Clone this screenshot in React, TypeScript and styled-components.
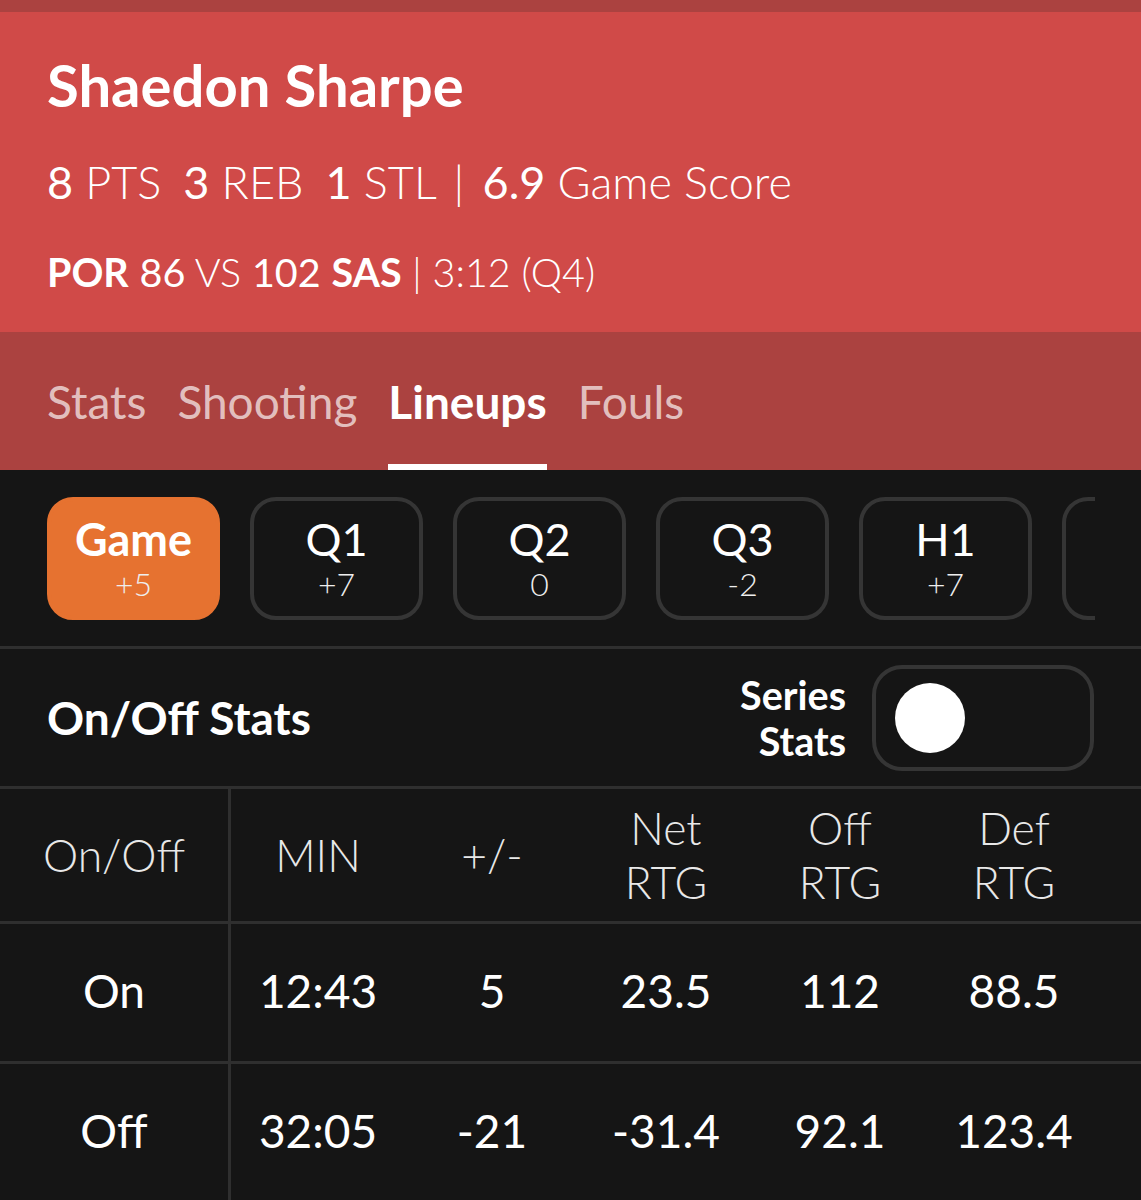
import React from 'react';
import styled, { createGlobalStyle } from 'styled-components';

const GlobalStyle = createGlobalStyle`
  html, body {
    margin: 0;
    padding: 0;
    background: #151515;
  }
  body {
    font-family: Lato, "Open Sans", sans-serif;
    color: #fff;
  }
`;

const periods = [
  { label: 'Game', diff: '+5', active: true },
  { label: 'Q1', diff: '+7' },
  { label: 'Q2', diff: '0' },
  { label: 'Q3', diff: '-2' },
  { label: 'H1', diff: '+7' },
  { label: '', diff: '' },
];

const headers = ['On/Off', 'MIN', '+/-', 'Net RTG', 'Off RTG', 'Def RTG'];

const rows = [
  ['On', '12:43', '5', '23.5', '112', '88.5'],
  ['Off', '32:05', '-21', '-31.4', '92.1', '123.4'],
];

export default function App() {
  return (
    <Page>
      <GlobalStyle />
      <TopStrip />
      <Header>
        <PlayerName>Shaedon Sharpe</PlayerName>
        <StatLine>
          <Stat>
            <b>8</b> PTS
          </Stat>
          <Stat>
            <b>3</b> REB
          </Stat>
          <b>1</b> STL <Sep>|</Sep> <b>6.9</b> Game Score
        </StatLine>
        <ScoreLine>
          <strong>POR</strong> <b>86</b> VS <b>102</b> <strong>SAS</strong> <Sep>|</Sep> 3:12 (Q4)
        </ScoreLine>
      </Header>

      <Tabs>
        {['Stats', 'Shooting', 'Lineups', 'Fouls'].map(t => (
          <Tab key={t} $active={t === 'Lineups'}>
            {t}
          </Tab>
        ))}
      </Tabs>

      <PeriodStrip>
        <PeriodScroller>
          {periods.map((p, i) => (
            <PeriodButton key={i} $active={p.active}>
              {p.label && <PeriodLabel $active={p.active}>{p.label}</PeriodLabel>}
              {p.diff && <PeriodDiff>{p.diff}</PeriodDiff>}
            </PeriodButton>
          ))}
        </PeriodScroller>
      </PeriodStrip>

      <SectionRow>
        <SectionTitle>On/Off Stats</SectionTitle>
        <ToggleGroup>
          <ToggleLabel>
            Series
            <br />
            Stats
          </ToggleLabel>
          <Toggle>
            <Knob />
          </Toggle>
        </ToggleGroup>
      </SectionRow>

      <Table>
        <TableRow $head>
          {headers.map((h, i) => (
            <HeadCell key={h} $first={i === 0}>
              {h.includes(' ') ? (
                <>
                  {h.split(' ')[0]}
                  <br />
                  {h.split(' ')[1]}
                </>
              ) : (
                h
              )}
            </HeadCell>
          ))}
        </TableRow>
        {rows.map(r => (
          <TableRow key={r[0]}>
            {r.map((v, i) => (
              <Cell key={i} $first={i === 0}>
                {v}
              </Cell>
            ))}
          </TableRow>
        ))}
      </Table>
    </Page>
  );
}

const Page = styled.div`
  width: 1141px;
  min-height: 1200px;
  background: #151515;
  overflow: hidden;
`;

const TopStrip = styled.div`
  height: 12px;
  background: #ab4240;
`;

const Header = styled.div`
  height: 320px;
  box-sizing: border-box;
  padding: 42px 47px 0;
  background: #d04a48;
  display: flex;
  flex-direction: column;
`;

const PlayerName = styled.div`
  font-size: 58px;
  font-weight: 700;
  line-height: 62px;
`;

const StatLine = styled.div`
  margin-top: 40px;
  font-size: 45px;
  font-weight: 300;
  line-height: 52px;
  white-space: nowrap;

  b {
    font-weight: 400;
  }
`;

const Stat = styled.span`
  margin-right: 22px;
`;

const Sep = styled.span`
  font-weight: 300;
  padding: 0 6px;
`;

const ScoreLine = styled.div`
  margin-top: 42px;
  font-size: 39.5px;
  font-weight: 300;
  line-height: 44px;

  b {
    font-weight: 400;
  }
  strong {
    font-weight: 700;
  }
  ${Sep} {
    padding: 0;
  }
`;

const Tabs = styled.div`
  height: 138px;
  box-sizing: border-box;
  padding: 0 47px;
  background: #ab4240;
  display: flex;
  gap: 31px;
`;

const Tab = styled.div<{ $active?: boolean }>`
  display: flex;
  align-items: center;
  padding-top: 6px;
  font-size: 46px;
  font-weight: ${p => (p.$active ? 700 : 400)};
  color: ${p => (p.$active ? '#fff' : 'rgba(255, 255, 255, 0.68)')};
  border-bottom: 6px solid ${p => (p.$active ? '#fff' : 'transparent')};
`;

const PeriodStrip = styled.div`
  padding: 27px 46px 26px 47px;
  border-bottom: 3px solid #2f2f2f;
`;

const PeriodScroller = styled.div`
  display: flex;
  gap: 30px;
  overflow: hidden;
`;

const PeriodButton = styled.div<{ $active?: boolean }>`
  flex: 0 0 auto;
  width: 173px;
  height: 123px;
  box-sizing: border-box;
  border-radius: 26px;
  border: 4px solid ${p => (p.$active ? '#e67230' : '#353535')};
  background: ${p => (p.$active ? '#e67230' : 'transparent')};
  display: flex;
  flex-direction: column;
  align-items: center;
  justify-content: center;
`;

const PeriodLabel = styled.div<{ $active?: boolean }>`
  font-size: 45px;
  font-weight: ${p => (p.$active ? 700 : 400)};
  line-height: 50px;
`;

const PeriodDiff = styled.div`
  font-size: 32px;
  font-weight: 300;
  line-height: 40px;
  color: #eee;
`;

const SectionRow = styled.div`
  height: 140px;
  box-sizing: border-box;
  padding: 0 47px;
  display: flex;
  align-items: center;
  justify-content: space-between;
  border-bottom: 3px solid #2f2f2f;
`;

const SectionTitle = styled.div`
  font-size: 46px;
  font-weight: 700;
`;

const ToggleGroup = styled.div`
  display: flex;
  align-items: center;
  gap: 26px;
`;

const ToggleLabel = styled.div`
  text-align: right;
  font-size: 39.5px;
  font-weight: 700;
  line-height: 46px;
`;

const Toggle = styled.div`
  width: 222px;
  height: 106px;
  box-sizing: border-box;
  border: 4px solid #353535;
  border-radius: 30px;
  display: flex;
  align-items: center;
  padding-left: 19px;
`;

const Knob = styled.div`
  width: 70px;
  height: 70px;
  border-radius: 50%;
  background: #fff;
`;

const Table = styled.div`
  display: flex;
  flex-direction: column;
`;

const HeadCell = styled.div<{ $first?: boolean }>`
  display: flex;
  align-items: center;
  justify-content: center;
  text-align: center;
  font-size: 44.5px;
  font-weight: 300;
  line-height: 54px;
  color: #e8e8e8;
  border-right: ${p => (p.$first ? '3px solid #2f2f2f' : 'none')};
`;

const Cell = styled(HeadCell)`
  font-size: 46px;
  font-weight: 400;
  color: #fff;
  padding-bottom: 4px;
`;

const TableRow = styled.div<{ $head?: boolean }>`
  display: grid;
  grid-template-columns: 231px repeat(5, 174px);
  height: ${p => (p.$head ? 132 : 137)}px;
  border-bottom: 3px solid #2f2f2f;

  &:last-child {
    height: 150px;
    border-bottom: none;
  }
  &:last-child ${Cell} {
    padding-bottom: 16px;
  }
`;
